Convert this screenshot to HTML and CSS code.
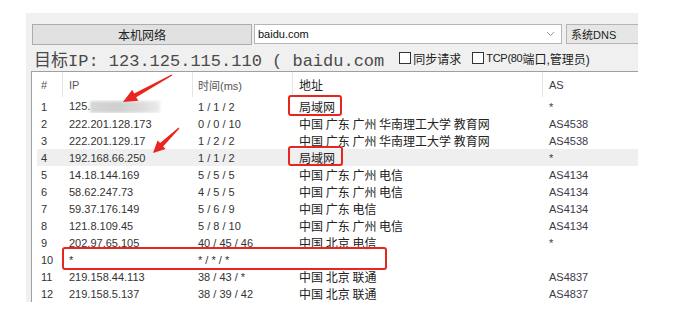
FILE: index.html
```html
<!DOCTYPE html>
<html lang="zh-CN">

<head>
    <meta charset="UTF-8">
    <meta name="viewport" content="width=device-width, initial-scale=1.0">
    <title>路由追踪</title>
    <link rel="stylesheet" href="styles.css">
</head>

<body>

    <div class="panel">

        <!-- Barra superior -->
        <div class="toolbar">
            <div class="btn">本机网络</div>
            <div class="combo">
                <span>baidu.com</span>
                <svg class="chevron" width="9" height="6" viewBox="0 0 9 6">
                    <path d="M1 1 L4.5 4.5 L8 1" fill="none" stroke="#9a9a9a" stroke-width="1"/>
                </svg>
            </div>
            <div class="dns">系统DNS</div>
        </div>

        <!-- Alvo -->
        <div class="target">
            <span class="target-ip">目标IP: 123.125.115.110 ( baidu.com</span>
            <label class="check first"><span class="box"></span>同步请求</label>
            <label class="check"><span class="box"></span><span class="narrow">TCP(80</span>端口,管理员)</label>
        </div>

        <!-- Tabela -->
        <div class="trace">
            <div class="row head">
                <div class="cell num">#</div>
                <div class="cell ip">IP</div>
                <div class="cell time">时间(ms)</div>
                <div class="cell addr">地址</div>
                <div class="cell as">AS</div>
            </div>

            <div class="row">
                <div class="cell num">1</div>
                <div class="cell ip">125.<span class="blur"></span></div>
                <div class="cell time">1 / 1 / 2</div>
                <div class="cell addr">局域网</div>
                <div class="cell as">*</div>
            </div>
            <div class="row">
                <div class="cell num">2</div>
                <div class="cell ip">222.201.128.173</div>
                <div class="cell time">0 / 0 / 10</div>
                <div class="cell addr">中国 广东 广州 华南理工大学 教育网</div>
                <div class="cell as">AS4538</div>
            </div>
            <div class="row">
                <div class="cell num">3</div>
                <div class="cell ip">222.201.129.17</div>
                <div class="cell time">1 / 2 / 2</div>
                <div class="cell addr">中国 广东 广州 华南理工大学 教育网</div>
                <div class="cell as">AS4538</div>
            </div>
            <div class="row selected">
                <div class="cell num">4</div>
                <div class="cell ip">192.168.66.250</div>
                <div class="cell time">1 / 1 / 2</div>
                <div class="cell addr">局域网</div>
                <div class="cell as">*</div>
            </div>
            <div class="row">
                <div class="cell num">5</div>
                <div class="cell ip">14.18.144.169</div>
                <div class="cell time">5 / 5 / 5</div>
                <div class="cell addr">中国 广东 广州 电信</div>
                <div class="cell as">AS4134</div>
            </div>
            <div class="row">
                <div class="cell num">6</div>
                <div class="cell ip">58.62.247.73</div>
                <div class="cell time">4 / 5 / 5</div>
                <div class="cell addr">中国 广东 广州 电信</div>
                <div class="cell as">AS4134</div>
            </div>
            <div class="row">
                <div class="cell num">7</div>
                <div class="cell ip">59.37.176.149</div>
                <div class="cell time">5 / 6 / 9</div>
                <div class="cell addr">中国 广东 电信</div>
                <div class="cell as">AS4134</div>
            </div>
            <div class="row">
                <div class="cell num">8</div>
                <div class="cell ip">121.8.109.45</div>
                <div class="cell time">5 / 8 / 10</div>
                <div class="cell addr">中国 广东 广州 电信</div>
                <div class="cell as">AS4134</div>
            </div>
            <div class="row">
                <div class="cell num">9</div>
                <div class="cell ip">202.97.65.105</div>
                <div class="cell time">40 / 45 / 46</div>
                <div class="cell addr">中国 北京 电信</div>
                <div class="cell as">*</div>
            </div>
            <div class="row">
                <div class="cell num">10</div>
                <div class="cell ip">*</div>
                <div class="cell time">* / * / *</div>
                <div class="cell addr"></div>
                <div class="cell as"></div>
            </div>
            <div class="row">
                <div class="cell num">11</div>
                <div class="cell ip">219.158.44.113</div>
                <div class="cell time">38 / 43 / *</div>
                <div class="cell addr">中国 北京 联通</div>
                <div class="cell as">AS4837</div>
            </div>
            <div class="row">
                <div class="cell num">12</div>
                <div class="cell ip">219.158.5.137</div>
                <div class="cell time">38 / 39 / 42</div>
                <div class="cell addr">中国 北京 联通</div>
                <div class="cell as">AS4837</div>
            </div>

            <!-- marcacoes vermelhas -->
            <div class="mark mark-lan1"></div>
            <div class="mark mark-lan4"></div>
            <div class="mark mark-timeout"></div>
        </div>
    </div>

    <!-- setas -->
    <svg class="arrows" width="683" height="313" viewBox="0 0 683 313">
        <polygon points="172.3,75.6 136.2,97.2 138.4,100.8 123,102 132.2,89.8 134.2,93.4 171.6,74.4" fill="#e8261f"/>
        <polygon points="179.4,128.5 163.1,146.4 165.6,148.9 153,153 157.6,140.5 160.1,143.1 178.6,127.6" fill="#e8261f"/>
    </svg>

</body>

</html>
```

FILE: styles.css
```css
* {
    box-sizing: border-box;
}

body {
    margin: 0;
    background-color: #fff;
    color: #333;
    font-family: "Liberation Sans", "Noto Sans CJK SC", sans-serif;
    position: relative;
    width: 683px;
    height: 313px;
    overflow: hidden;
}

.panel {
    margin: 13px 0 0 26px;
    width: 612px;
    height: 289px;
    background-color: #f0f0f0;
    padding: 11px 0 0 5px;
    display: flex;
    flex-direction: column;
    overflow: hidden;
}

/* barra superior */

.toolbar {
    display: flex;
    align-items: flex-start;
    padding-left: 1px;
    height: 21px;
}

.btn {
    width: 220px;
    height: 21px;
    background-color: #e1e1e1;
    border: 1px solid #adadad;
    font-size: 12px;
    color: #222;
    display: flex;
    align-items: center;
    justify-content: center;
    font-family: "Noto Sans CJK SC", sans-serif;
}

.combo {
    margin-left: 2px;
    width: 308px;
    height: 20px;
    background-color: #fff;
    border: 1px solid #b5b5b5;
    display: flex;
    align-items: center;
    justify-content: space-between;
    padding: 0 6px 0 3px;
    font-size: 11px;
    color: #111;
}

.dns {
    margin-left: 4px;
    flex: 1;
    height: 20px;
    background-color: #e6e6e6;
    border: 1px solid #b5b5b5;
    border-right: none;
    font-size: 11px;
    color: #222;
    display: flex;
    align-items: center;
    padding-left: 4px;
}

/* alvo */

.target {
    height: 28px;
    display: flex;
    align-items: center;
    padding-left: 3px;
}

.target-ip {
    font-family: "Liberation Mono", "Noto Sans CJK SC", monospace;
    font-size: 17px;
    color: #4a4a4a;
    white-space: pre;
}

.check {
    display: flex;
    align-items: center;
    font-size: 12px;
    color: #222;
    margin-left: 11px;
    white-space: nowrap;
}

.check.first {
    margin-left: 15px;
}

.check .box {
    width: 12px;
    height: 12px;
    border: 1px solid #333;
    background-color: #fff;
    margin-right: 2px;
}

.check .narrow {
    font-size: 11px;
    letter-spacing: -0.3px;
}

/* tabela */

.trace {
    position: relative;
    flex: 1;
    background-color: #fff;
    border-top: 1px solid #a0a0a0;
    border-left: 1px solid #a0a0a0;
    padding-left: 5px;
}

.row {
    display: grid;
    grid-template-columns: 26px 130px 100px 250px 1fr;
    height: 17px;
    align-items: center;
    font-size: 11px;
    color: #333;
}

.row.head {
    height: 25px;
    color: #555;
    align-items: stretch;
    margin-bottom: 1px;
}

.row.head .cell {
    display: flex;
    align-items: center;
    border-right: 1px solid #e5e5e5;
}

.row.head .cell.as {
    border-right: none;
}

.row.selected {
    background-color: #efefef;
}

.cell {
    white-space: nowrap;
    overflow: hidden;
}

.cell.num {
    padding-left: 4px;
}

.cell.ip {
    padding-left: 6px;
}

.cell.time {
    padding-left: 5px;
}

.cell.addr {
    padding-left: 6px;
    font-size: 12px;
    font-family: "Noto Sans CJK SC", sans-serif;
    color: #222;
}

.cell.as {
    padding-left: 6px;
    color: #3b3b4a;
}

.blur {
    display: inline-block;
    width: 70px;
    height: 12px;
    vertical-align: middle;
    background: linear-gradient(90deg, #d6d6d6, #cfcfcf 40%, #dcdcdc 75%, #ececec);
    filter: blur(1.5px);
}

.mark {
    position: absolute;
    border: 2.5px solid #e8261f;
    border-radius: 3px;
}

.mark-lan1 {
    left: 256px;
    top: 23px;
    width: 54px;
    height: 21px;
}

.mark-lan4 {
    left: 256px;
    top: 74px;
    width: 55px;
    height: 20px;
}

.mark-timeout {
    left: 30px;
    top: 175px;
    width: 325px;
    height: 23px;
}

.arrows {
    position: absolute;
    left: 0;
    top: 0;
    pointer-events: none;
}
```
